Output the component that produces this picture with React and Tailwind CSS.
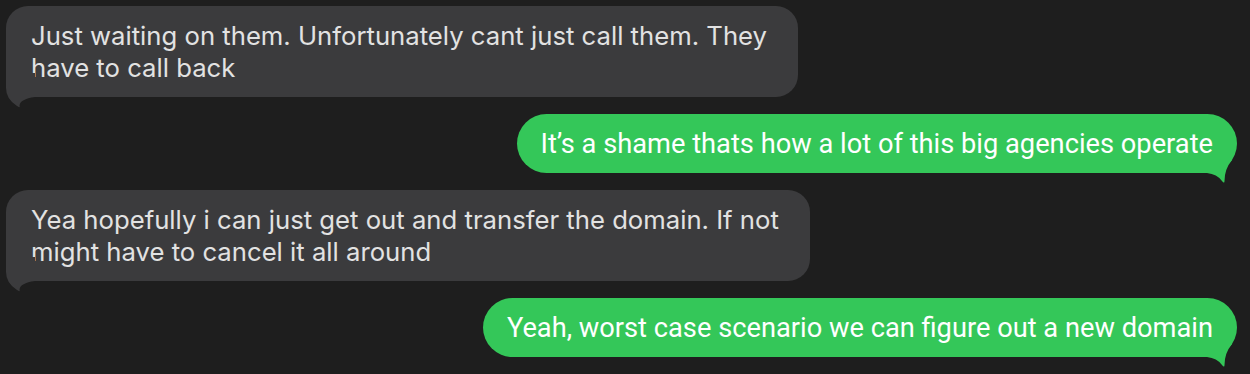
const messages = [
  {
    from: "them",
    lines: ["Just waiting on them. Unfortunately cant just call them. They", "have to call back"],
  },
  { from: "me", lines: ["It’s a shame thats how a lot of this big agencies operate"] },
  {
    from: "them",
    lines: ["Yea hopefully i can just get out and transfer the domain. If not", "might have to cancel it all around"],
  },
  { from: "me", lines: ["Yeah, worst case scenario we can figure out a new domain"] },
];

function GrayTail() {
  return (
    <svg
      className="absolute left-0 bottom-[-11px]"
      width="30"
      height="35"
      viewBox="0 -24 30 35"
      fill="#3b3b3d">
      <path d="M0 -24 L0 -9 Q0 2 11 9 Q14.5 11.5 13.5 8.5 Q14 2 29 0 L29 -24 Z" />
    </svg>
  );
}

function GreenTail() {
  return (
    <svg
      className="absolute right-0 bottom-[-10px]"
      width="30"
      height="26"
      viewBox="-30 -16 30 26"
      fill="#34c759">
      <path d="M-30 -16 L-30 0 Q-20 1 -15 8 Q-12.5 11 -12.5 8 Q-12.5 -4 -5 -13 L-6 -16 Z" />
    </svg>
  );
}

function Bubble({ from, lines }) {
  if (from === "them") {
    return (
      <div className="relative self-start w-fit rounded-[22px] bg-[#3b3b3d] pl-[25px] pr-[31px] pt-[14px] pb-[13px] text-[25.7px] leading-[32px] text-[#e2e2e2] font-['Inter',sans-serif]">
        {lines.map((line, i) => (
          <div key={i} className="whitespace-nowrap">
            {line}
          </div>
        ))}
        <GrayTail />
      </div>
    );
  }
  return (
    <div className="relative self-end w-fit rounded-full bg-[#34c759] px-[24px] pt-[14px] pb-[13px] text-[27.25px] leading-[32px] text-white font-['Roboto',sans-serif]">
      <div className="whitespace-nowrap">{lines[0]}</div>
      <GreenTail />
    </div>
  );
}

export default function App() {
  return (
    <div className="w-[1250px] h-[374px] bg-[#1e1e1e] flex flex-col gap-[17px] pt-[6px] pl-[6px] pr-[13px] overflow-hidden">
      {messages.map((m, i) => (
        <Bubble key={i} from={m.from} lines={m.lines} />
      ))}
    </div>
  );
}
